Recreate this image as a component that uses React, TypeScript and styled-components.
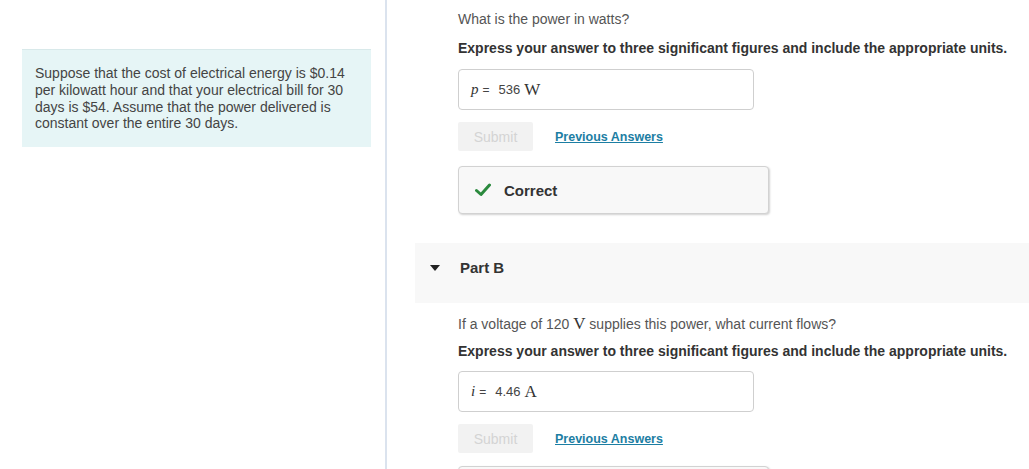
import styled, { createGlobalStyle } from "styled-components";

const Global = createGlobalStyle`
  html, body {
    margin: 0;
    padding: 0;
    background: #fff;
    font-family: "Liberation Sans", Arial, sans-serif;
    color: #333;
  }
`;

const Page = styled.div`
  display: flex;
  height: 469px;
  overflow: hidden;
`;

const Sidebar = styled.aside`
  width: 385px;
  flex-shrink: 0;
  border-right: 2px solid #dbe3ee;
  padding-top: 49px;
`;

const Intro = styled.div`
  margin-left: 22px;
  width: 349px;
  height: 98px;
  box-sizing: border-box;
  background: #e6f5f6;
  border-top: 1px solid #d8e9ea;
  padding: 15px 13px 0;
  font-size: 14px;
  line-height: 16.8px;
  color: #444;
`;

const Main = styled.main`
  flex: 1;
  padding-left: 28px;
  min-width: 0;
`;

const PartBody = styled.section<{ $top: number }>`
  padding-left: 43px;
  padding-top: ${(p) => p.$top}px;
`;

const Question = styled.p`
  margin: 0;
  font-size: 14px;
  line-height: 16px;
  color: #555;
  white-space: nowrap;
`;

const Instructions = styled.p<{ $gap: number }>`
  margin: ${(p) => p.$gap}px 0 0;
  font-size: 14px;
  line-height: 16px;
  font-weight: bold;
  color: #333;
  white-space: nowrap;
`;

const AnswerBox = styled.div<{ $gap: number }>`
  margin-top: ${(p) => p.$gap}px;
  width: 296px;
  height: 41px;
  box-sizing: border-box;
  border: 1px solid #cfcfcf;
  border-radius: 4px;
  display: flex;
  align-items: center;
  padding-left: 12px;
  gap: 4px;
`;

const Var = styled.span`
  font-family: "Liberation Serif", "Times New Roman", serif;
  font-style: italic;
  font-size: 15px;
  color: #333;
`;

const Eq = styled.span`
  font-size: 12px;
  color: #444;
  margin-right: 5px;
`;

const Value = styled.span`
  font-size: 13px;
  color: #444;
`;

const Unit = styled.span`
  font-family: "Liberation Serif", "Times New Roman", serif;
  font-size: 17px;
  color: #333;
`;

const Actions = styled.div`
  margin-top: 12px;
  display: flex;
  align-items: center;
  gap: 22px;
  height: 29px;
`;

const SubmitButton = styled.button`
  width: 75px;
  height: 29px;
  border: none;
  border-radius: 2px;
  background: #f2f2f2;
  color: #d4d4d4;
  font-family: "Liberation Sans", Arial, sans-serif;
  font-size: 14px;
  padding: 0;
`;

const PrevLink = styled.a`
  font-size: 12.5px;
  font-weight: bold;
  color: #1c7ea3;
  text-decoration: underline;
`;

const Feedback = styled.div<{ $gap: number }>`
  margin-top: ${(p) => p.$gap}px;
  width: 311px;
  height: 48px;
  box-sizing: border-box;
  background: #f8f8f8;
  border: 1px solid #d2d2d2;
  border-radius: 4px;
  box-shadow: 1px 1px 2px rgba(0, 0, 0, 0.18);
  display: flex;
  align-items: center;
  padding-left: 16px;
  gap: 13px;
  font-size: 15px;
  font-weight: bold;
  color: #333;
`;

const PartHeader = styled.div`
  margin-top: 29px;
  height: 60px;
  box-sizing: border-box;
  padding: 0 0 12px 15px;
  background: #f8f8f8;
  display: flex;
  align-items: center;
  gap: 20px;
  font-size: 15px;
  font-weight: bold;
  color: #333;
`;

const Caret = styled.span`
  width: 0;
  height: 0;
  border-left: 5px solid transparent;
  border-right: 5px solid transparent;
  border-top: 6px solid #222;
  margin-top: 1px;
`;

function Check() {
  return (
    <svg width="16" height="14" viewBox="0 0 16 14">
      <path
        d="M1.5 7.5 L6 11.5 L14.5 2"
        fill="none"
        stroke="#2b8a3e"
        strokeWidth="3"
        strokeLinecap="round"
        strokeLinejoin="round"
      />
    </svg>
  );
}

function AnswerRow({ v, value, unit }: { v: string; value: string; unit: string }) {
  return (
    <>
      <Var>{v}</Var>
      <Eq>=</Eq>
      <Value>{value}</Value>
      <Unit>{unit}</Unit>
    </>
  );
}

const instructions =
  "Express your answer to three significant figures and include the appropriate units.";

export default function App() {
  return (
    <>
      <Global />
      <Page>
        <Sidebar>
          <Intro>
            Suppose that the cost of electrical energy is $0.14 per kilowatt hour and that
            your electrical bill for 30 days is $54. Assume that the power delivered is
            constant over the entire 30 days.
          </Intro>
        </Sidebar>
        <Main>
          <PartBody $top={11}>
            <Question>What is the power in watts?</Question>
            <Instructions $gap={13}>{instructions}</Instructions>
            <AnswerBox $gap={13}>
              <AnswerRow v="p" value="536" unit="W" />
            </AnswerBox>
            <Actions>
              <SubmitButton disabled>Submit</SubmitButton>
              <PrevLink href="#">Previous Answers</PrevLink>
            </Actions>
            <Feedback $gap={15}>
              <Check />
              Correct
            </Feedback>
          </PartBody>

          <PartHeader>
            <Caret />
            Part B
          </PartHeader>

          <PartBody $top={13}>
            <Question>
              If a voltage of 120 <Unit>V</Unit> supplies this power, what current flows?
            </Question>
            <Instructions $gap={11}>{instructions}</Instructions>
            <AnswerBox $gap={12}>
              <AnswerRow v="i" value="4.46" unit="A" />
            </AnswerBox>
            <Actions>
              <SubmitButton disabled>Submit</SubmitButton>
              <PrevLink href="#">Previous Answers</PrevLink>
            </Actions>
            <Feedback $gap={13} />
          </PartBody>
        </Main>
      </Page>
    </>
  );
}
